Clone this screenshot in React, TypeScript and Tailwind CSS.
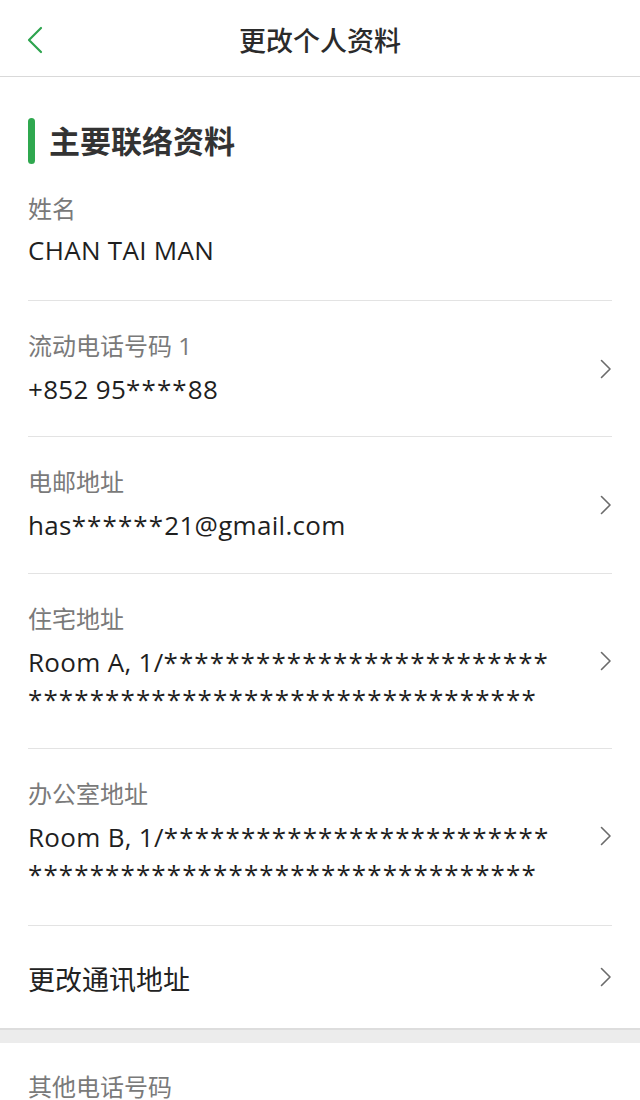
import React from 'react';

const font = { fontFamily: '"Open Sans", "Noto Sans CJK SC", sans-serif' };

function Chevron() {
  return (
    <svg width="14" height="20" viewBox="0 0 14 20" className="shrink-0 mr-[-1px]">
      <path d="M2.5 1.5 L11 10 L2.5 18.5" fill="none" stroke="#6b6b6b" strokeWidth="1.6" strokeLinecap="round" strokeLinejoin="round" />
    </svg>
  );
}

// masked characters are drawn a little wider in the app
function Masked({ text }: { text: string }) {
  const parts = text.split(/(\*+)/);
  return (
    <>
      {parts.map((p, i) =>
        p.startsWith('*') ? (
          <span key={i} className="tracking-[1.1px]">{p}</span>
        ) : (
          <span key={i}>{p}</span>
        )
      )}
    </>
  );
}

type Row = { label: string; lines: string[]; pb: string };

const rows: Row[] = [
  { label: '流动电话号码 1', lines: ['+852 95****88'], pb: 'pb-[28px]' },
  { label: '电邮地址', lines: ['has******21@gmail.com'], pb: 'pb-[29px]' },
  {
    label: '住宅地址',
    lines: ['Room A, 1/*************************', '*********************************'],
    pb: 'pb-[30px]',
  },
  {
    label: '办公室地址',
    lines: ['Room B, 1/*************************', '*********************************'],
    pb: 'pb-[32px]',
  },
];

function InfoRow({ row }: { row: Row }) {
  return (
    <div className={`flex items-center border-t border-[#e3e3e3] pt-[29px] ${row.pb}`}>
      <div className="flex-1 min-w-0">
        <div className="text-[24px] leading-[32px] text-[#7a7a7a]">{row.label}</div>
        <div className="mt-[9px] text-[26px] leading-[37px] tracking-[0.3px] text-[#1f1f1f] whitespace-nowrap overflow-hidden">
          {row.lines.map((l, i) => (
            <div key={i}>
              <Masked text={l} />
            </div>
          ))}
        </div>
      </div>
      <Chevron />
    </div>
  );
}

export default function App() {
  return (
    <div className="w-[640px] h-[1100px] bg-white overflow-hidden" style={font}>
      {/* Top bar */}
      <div className="relative h-[77px] border-b border-[#d9d9d9] flex items-center justify-center">
        <button className="absolute left-[26px] top-[26px]">
          <svg width="18" height="28" viewBox="0 0 18 28">
            <path d="M15 2 L3 14 L15 26" fill="none" stroke="#2ea44f" strokeWidth="2.2" strokeLinecap="round" strokeLinejoin="round" />
          </svg>
        </button>
        <h1 className="text-[27px] leading-[34px] font-medium text-[#2b2b2b] mt-[6px]">更改个人资料</h1>
      </div>

      <div className="px-[28px]">
        {/* Section title */}
        <div className="flex items-center mt-[41px] h-[46px]">
          <div className="w-[7px] h-[46px] rounded-full bg-[#2fa84f]" />
          <h2 className="ml-[14px] text-[31px] leading-[40px] font-bold text-[#333333]">主要联络资料</h2>
        </div>

        {/* Name */}
        <div className="pt-[29px] pb-[31px]">
          <div className="text-[24px] leading-[32px] text-[#7a7a7a]">姓名</div>
          <div className="mt-[7px] text-[26px] leading-[37px] tracking-[0.3px] text-[#1f1f1f]">CHAN TAI MAN</div>
        </div>

        {rows.map((r) => (
          <InfoRow key={r.label} row={r} />
        ))}

        {/* Change correspondence address */}
        <div className="flex items-center justify-between border-t border-[#e3e3e3] h-[103px]">
          <div className="text-[27px] leading-[36px] text-[#222222] mt-[6px]">更改通讯地址</div>
          <Chevron />
        </div>
      </div>

      {/* separator band */}
      <div className="h-[15px] bg-[#ececec] border-t-2 border-[#dddddd]" />

      <div className="px-[28px] pt-[32px]">
        <div className="text-[24px] leading-[24px] text-[#7a7a7a]">其他电话号码</div>
      </div>
    </div>
  );
}
